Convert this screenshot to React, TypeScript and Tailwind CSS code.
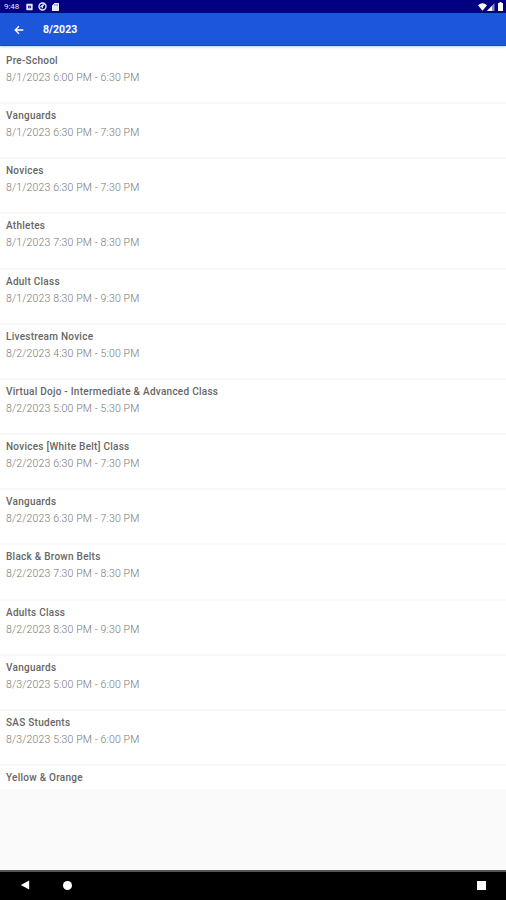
const classes = [
  { name: "Pre-School", time: "8/1/2023 6:00 PM - 6:30 PM" },
  { name: "Vanguards", time: "8/1/2023 6:30 PM - 7:30 PM" },
  { name: "Novices", time: "8/1/2023 6:30 PM - 7:30 PM" },
  { name: "Athletes", time: "8/1/2023 7:30 PM - 8:30 PM" },
  { name: "Adult Class", time: "8/1/2023 8:30 PM - 9:30 PM" },
  { name: "Livestream Novice", time: "8/2/2023 4:30 PM - 5:00 PM" },
  {
    name: "Virtual Dojo - Intermediate & Advanced Class",
    time: "8/2/2023 5:00 PM - 5:30 PM",
  },
  { name: "Novices [White Belt] Class", time: "8/2/2023 6:30 PM - 7:30 PM" },
  { name: "Vanguards", time: "8/2/2023 6:30 PM - 7:30 PM" },
  { name: "Black & Brown Belts", time: "8/2/2023 7:30 PM - 8:30 PM" },
  { name: "Adults Class", time: "8/2/2023 8:30 PM - 9:30 PM" },
  { name: "Vanguards", time: "8/3/2023 5:00 PM - 6:00 PM" },
  { name: "SAS Students", time: "8/3/2023 5:30 PM - 6:00 PM" },
  { name: "Yellow & Orange" },
];

function StatusBar() {
  return (
    <div className="flex h-[13px] shrink-0 items-center justify-between bg-[#000080] pl-[4px] pr-[3px] text-[#e8e8fa]">
      <div className="flex items-center">
        <span className="w-[22px] pt-px text-[8px] leading-[12px] tracking-[-0.1px]">9:48</span>
        <svg className="h-[8px] w-[7px]" viewBox="0 0 7 8" fill="currentColor">
          <path
            fillRule="evenodd"
            d="M1 .7h5q.7 0 .7.7v5.200q0 .7-.7.7H1q-.7 0-.7-.7V1.400Q.3.7 1 .7zM2.200 2.700v2.600h2.600V2.700z"
          />
          <circle cx="3.500" cy="4" r=".5" />
        </svg>
        <svg className="ml-[5px] h-[9px] w-[9px]" viewBox="0 0 9 9" fill="none">
          <circle cx="4.500" cy="4.500" r="3.500" stroke="currentColor" strokeWidth="1.400" />
          <path d="M1.500 5.200 4.800 2.200h2.200L5 4.500v1.200L3.800 7.200v-2z" fill="currentColor" />
        </svg>
        <svg className="ml-[5px] h-[8px] w-[7px]" viewBox="0 0 7 8" fill="currentColor">
          <path
            fillRule="evenodd"
            d="M2.500 0H6.500q.5 0 .5.5v7q0 .5-.5.5h-6Q0 8 0 7.500v-5zM2.500 1.500v1h.6v-1zm1.300 0v1h.6v-1zm1.300 0v1h.6v-1z"
          />
        </svg>
      </div>
      <div className="flex items-center text-white">
        <svg className="h-[8px] w-[9px]" viewBox="0 0 9 8" fill="currentColor">
          <path d="M0 2.200Q4.500-1.600 9 2.200L4.500 7.800z" />
        </svg>
        <svg className="h-[8px] w-[8px]" viewBox="0 0 8 8">
          <path d="M7.500 0v8H0z" fill="currentColor" fillOpacity=".55" />
          <path d="M5 2.700V8H0z" fill="currentColor" />
        </svg>
        <svg className="ml-[3px] h-[9px] w-[5px]" viewBox="0 0 5 9" fill="currentColor">
          <path d="M1.500 0h2v1H4.500q.5 0 .5.5v7q0 .5-.5.5h-4Q0 9 0 8.500v-7Q0 1 .5 1h1z" />
        </svg>
      </div>
    </div>
  );
}

function AppBar() {
  return (
    <header className="z-10 flex h-[33px] shrink-0 items-center border-b border-[#1648c8] bg-[#1c56db] pl-[14px] pt-[2px] text-white shadow-[0_1px_2px_rgba(28,86,219,0.3)]">
      <button type="button" aria-label="Back" className="flex">
        <svg className="h-[10px] w-[10px]" viewBox="0 0 10 10" fill="none" stroke="currentColor">
          <path d="M9.300 5H1.300M5 1.200 1.200 5 5 8.800" strokeWidth="1.300" />
        </svg>
      </button>
      <h1 className="ml-[19px] text-[10.5px] leading-[14px] font-bold tracking-[0.05px]">8/2023</h1>
    </header>
  );
}

function NavBar() {
  return (
    <nav className="flex h-[30px] shrink-0 items-center border-t-2 border-[#555] bg-black pb-[2px] pl-[20px] pr-[20px] text-white">
      <svg className="h-[10px] w-[10px]" viewBox="0 0 10 10" fill="currentColor">
        <path d="M.8 5 9.200.500v9z" />
      </svg>
      <div className="ml-[33px] h-[9px] w-[9px] rounded-full bg-current" />
      <div className="ml-auto h-[9px] w-[9px] bg-current" />
    </nav>
  );
}

export default function App() {
  return (
    <div className="flex h-[900px] w-[506px] flex-col overflow-hidden bg-[#fafafa] font-['Roboto',sans-serif]">
      <StatusBar />
      <AppBar />
      <ul className="h-[743px] shrink-0 overflow-hidden bg-white pt-[2.8px]">
        {classes.map((item, i) => (
          <li
            key={i}
            className="h-[55.2px] border-b-2 border-[#f9f9f9] pl-[6px] pt-[5px] whitespace-nowrap"
          >
            <p className="text-[10px] leading-[14px] font-medium tracking-[0.26px] text-[#666]">
              {item.name}
            </p>
            {item.time && (
              <p className="mt-[3px] text-[10.5px] leading-[14px] font-light tracking-[0.15px] text-[#777]">
                {item.time}
              </p>
            )}
          </li>
        ))}
      </ul>
      <div className="flex-1" />
      <NavBar />
    </div>
  );
}
